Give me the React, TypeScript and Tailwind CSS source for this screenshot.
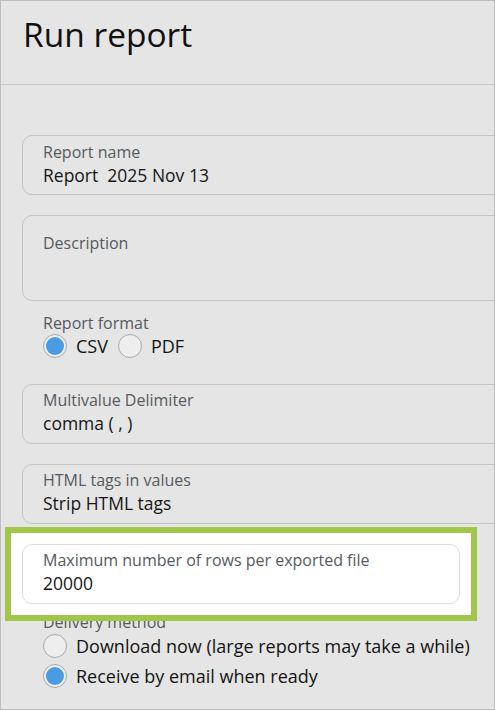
import React from 'react';

const font = { fontFamily: '"Open Sans", "Noto Sans", sans-serif' };

interface FieldProps {
  label: string;
  value?: string;
  className?: string;
}

const Field: React.FC<FieldProps> = ({ label, value, className = '' }) => (
  <div className={`flex flex-col rounded-[10px] border px-5 ${className}`}>
    <span className="text-[16px] leading-[20px] text-[#555a60]">{label}</span>
    {value && <span className="mt-[1px] text-[17.5px] leading-[24px] text-[#161616]">{value}</span>}
  </div>
);

interface RadioProps {
  label: string;
  checked?: boolean;
}

const Radio: React.FC<RadioProps> = ({ label, checked }) => (
  <label className="flex items-center gap-[9px] text-[18px] leading-[24px] text-[#141414]">
    <span className="flex h-6 w-6 items-center justify-center rounded-full border border-[#a9a9a9] bg-[#eeeeee]">
      {checked && <span className="h-[18px] w-[18px] rounded-full bg-[#4a9be2]" />}
    </span>
    {label}
  </label>
);

export default function App() {
  return (
    <div
      className="relative h-[710px] w-[495px] overflow-hidden border border-[#bdbdbd] bg-[#e5e5e5]"
      style={font}
    >
      <header className="h-[84px] border-b border-[#c7c7c7] pl-[22px] pt-[11px]">
        <h1 className="text-[33.5px] leading-[44px] text-[#111111]">Run report</h1>
      </header>

      <div className="pl-[21px] pt-[50px]">
        <Field
          label="Report name"
          value="Report  2025 Nov 13"
          className="h-[60px] w-[520px] border-[#c4c4c4] pt-[6px] whitespace-pre"
        />

        <Field label="Description" className="mt-5 h-[86px] w-[520px] border-[#c4c4c4] pt-[17px]" />

        <div className="mt-3 flex flex-col pl-[21px]">
          <span className="text-[16px] leading-[20px] text-[#555a60]">Report format</span>
          <div className="mt-[1px] flex gap-[10px]">
            <Radio label="CSV" checked />
            <Radio label="PDF" />
          </div>
        </div>

        <Field
          label="Multivalue Delimiter"
          value="comma ( , )"
          className="mt-[26px] h-[60px] w-[520px] border-[#c4c4c4] pt-[5px]"
        />

        <Field
          label="HTML tags in values"
          value="Strip HTML tags"
          className="mt-5 h-[60px] w-[520px] border-[#c4c4c4] pt-[5px]"
        />

        <div className="relative mt-[20px] w-[438px]">
          <div className="absolute -inset-[17px] z-10 border-[6px] border-[#a1c64a] bg-white" />
          <Field
            label="Maximum number of rows per exported file"
            value="20000"
            className="relative z-20 h-[60px] w-[438px] border-[#dedede] pt-[5px]"
          />
        </div>

        <div className="mt-[8px] flex flex-col pl-[21px]">
          <span className="text-[16px] leading-[20px] text-[#555a60]">Delivery method</span>
          <div className="mt-[2px] flex flex-col gap-[6px]">
            <Radio label="Download now (large reports may take a while)" />
            <Radio label="Receive by email when ready" checked />
          </div>
        </div>
      </div>
    </div>
  );
}
